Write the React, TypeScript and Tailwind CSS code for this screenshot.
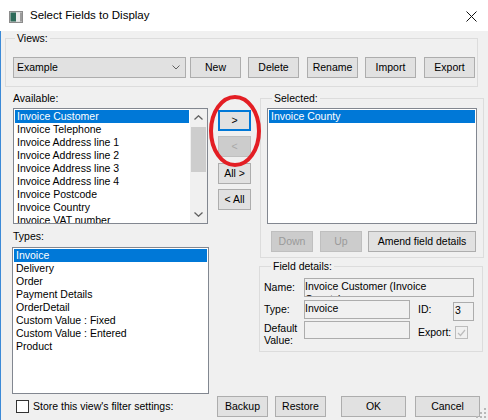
import React from 'react';

const available = [
  'Invoice Customer',
  'Invoice Telephone',
  'Invoice Address line 1',
  'Invoice Address line 2',
  'Invoice Address line 3',
  'Invoice Address line 4',
  'Invoice Postcode',
  'Invoice Country',
  'Invoice VAT number',
];

const types = [
  'Invoice',
  'Delivery',
  'Order',
  'Payment Details',
  'OrderDetail',
  'Custom Value : Fixed',
  'Custom Value : Entered',
  'Product',
];

type ButtonProps = {
  label: React.ReactNode;
  className?: string;
  disabled?: boolean;
  primary?: boolean;
};

function Button({ label, className = '', disabled = false, primary = false }: ButtonProps) {
  const tone = disabled
    ? 'border bg-[#cccccc] border-[#bfbfbf] text-[#9a9a9a]'
    : primary
      ? 'border-2 bg-[#e1e1e1] border-[#0078d7] text-black'
      : 'border bg-[#e1e1e1] border-[#adadad] text-black';
  return (
    <div className={`flex h-[21px] shrink-0 items-center justify-center leading-[13px] ${tone} ${className}`}>
      {label}
    </div>
  );
}

function Row({ text, selected = false }: { text: string; selected?: boolean }) {
  return (
    <div
      className={`h-[13px] shrink-0 overflow-hidden whitespace-nowrap pl-[2px] leading-[13px] ${
        selected ? 'bg-[#0078d7] text-white' : ''
      }`}
    >
      {text}
    </div>
  );
}

function Chevron({ up = false }: { up?: boolean }) {
  return (
    <svg width="9" height="5" viewBox="0 0 9 5" className="block">
      <path
        d={up ? 'M0.5 4.5 L4.5 0.8 L8.5 4.5' : 'M0.5 0.5 L4.5 4.2 L8.5 0.5'}
        fill="none"
        stroke="#606060"
        strokeWidth="1.3"
      />
    </svg>
  );
}

export default function App() {
  return (
    <div className="relative flex h-[420px] w-[488px] flex-col overflow-hidden bg-[#f0f0f0] font-['Liberation_Sans',Arial,sans-serif] text-[10.5px] text-black">
      {/* title bar */}
      <div className="flex h-[31px] shrink-0 items-center bg-white">
        <svg width="14" height="12" viewBox="0 0 14 12" className="ml-[9px] mt-[2px]">
          <rect x="0.5" y="0.5" width="13" height="11" fill="#d4d4d4" stroke="#8c8c8c" />
          <rect x="1.5" y="1.5" width="5.5" height="9" fill="#2e6b5a" />
          <rect x="7" y="1.5" width="4" height="9" fill="#ececec" />
          <rect x="11" y="1.5" width="2" height="9" fill="#9c9c9c" />
        </svg>
        <span className="ml-[7px] mt-[1px] text-[11.5px]">Select Fields to Display</span>
        <svg width="11" height="11" viewBox="0 0 11 11" className="ml-auto mr-[11px] mt-[2px]">
          <path d="M0.5 0.5 L10.5 10.5 M10.5 0.5 L0.5 10.5" stroke="#111" strokeWidth="1" />
        </svg>
      </div>

      <div className="flex flex-1 flex-col border-l border-[#3c8ad7]">
        {/* Views */}
        <fieldset className="ml-[4px] mt-[1px] w-[473px] min-w-0 border border-[#dcdcdc] pb-[8px] pl-[7px]">
          <legend className="ml-[2px] px-[2px] leading-[13px]">Views:</legend>
          <div className="mt-[12px] flex items-center">
            <div className="flex h-[21px] w-[173px] items-center border border-[#adadad] bg-[#e1e1e1] pl-[3px] pr-[5px] leading-[13px]">
              <span className="flex-1">Example</span>
              <svg width="8" height="5" viewBox="0 0 8 5">
                <path d="M0.5 0.5 L4 4 L7.5 0.5" fill="none" stroke="#606060" strokeWidth="1" />
              </svg>
            </div>
            <Button label="New" className="ml-[4px] w-[51px]" />
            <Button label="Delete" className="ml-[7px] w-[51px]" />
            <Button label="Rename" className="ml-[8px] w-[51px]" />
            <Button label="Import" className="ml-[7px] w-[51px]" />
            <Button label="Export" className="ml-[8px] w-[51px]" />
          </div>
        </fieldset>

        {/* lists */}
        <div className="ml-[11px] mt-[5px] flex items-start">
          <div className="flex w-[197px] flex-col">
            <div className="pl-[1px] leading-[13px]">Available:</div>
            <div className="ml-[1px] mt-[3px] flex h-[116px] w-[195px] border border-[#828790] bg-white">
              <div className="flex min-w-0 flex-1 flex-col overflow-hidden p-[1px]">
                {available.map((item, idx) => (
                  <Row key={item} text={item} selected={idx === 0} />
                ))}
              </div>
              <div className="flex w-[17px] flex-col bg-[#f0f0f0]">
                <div className="flex h-[17px] items-center justify-center">
                  <Chevron up />
                </div>
                <div className="mx-[1px] mt-[1px] h-[45px] bg-[#cdcdcd]" />
                <div className="flex-1" />
                <div className="flex h-[17px] items-center justify-center">
                  <Chevron />
                </div>
              </div>
            </div>
            <div className="mt-[6px] pl-[1px] leading-[13px]">Types:</div>
            <div className="mt-[4px] flex h-[147px] w-[197px] flex-col border border-[#828790] bg-white p-[1px]">
              {types.map((item, idx) => (
                <Row key={item} text={item} selected={idx === 0} />
              ))}
            </div>
          </div>

          <div className="ml-[9px] mt-[18px] flex w-[33px] flex-col">
            <Button label=">" primary className="w-[33px]" />
            <Button label="<" disabled className="mt-[5px] w-[33px] text-[#a8a8a8]" />
            <Button label="All >" className="mt-[6px] w-[33px]" />
            <Button label="< All" className="mt-[5px] w-[33px]" />
          </div>

          <div className="ml-[9px] flex flex-col">
            <fieldset className="w-[224px] min-w-0 border border-[#dcdcdc] pb-[5px] pl-[6px]">
              <legend className="ml-[5px] px-[2px] leading-[13px]">Selected:</legend>
              <div className="mt-[3px] flex h-[116px] w-[210px] flex-col border border-[#828790] bg-white p-[1px]">
                <Row text="Invoice County" selected />
              </div>
              <div className="mt-[7px] flex">
                <Button label="Down" disabled className="ml-[4px] w-[42px]" />
                <Button label="Up" disabled className="ml-[7px] w-[42px]" />
                <Button label="Amend field details" className="ml-[6px] w-[108px]" />
              </div>
            </fieldset>

            <fieldset className="-ml-[1px] mt-[2px] w-[224px] min-w-0 border border-[#dcdcdc] pb-[5px] pl-[4px]">
              <legend className="ml-[7px] px-[2px] leading-[13px]">Field details:</legend>
              <div className="mt-[5px] flex h-[19px] items-center">
                <div className="w-[40px] leading-[13px]">Name:</div>
                <div className="h-[19px] w-[170px] overflow-hidden border border-[#acacac] bg-[#f0f0f0] pt-[1px] leading-[13px]">
                  <div className="whitespace-nowrap">Invoice Customer (Invoice</div>
                  <div className="whitespace-nowrap">County)</div>
                </div>
              </div>
              <div className="mt-[3px] flex h-[21px] items-start">
                <div className="mt-[3px] w-[40px] leading-[13px]">Type:</div>
                <div className="h-[19px] w-[106px] border border-[#acacac] bg-[#f0f0f0] pt-[1px] leading-[13px]">
                  Invoice
                </div>
                <div className="ml-[8px] mt-[3px] w-[35px] leading-[13px]">ID:</div>
                <div className="mt-[2px] h-[19px] w-[21px] border border-[#acacac] bg-[#f0f0f0] pl-[1px] pt-[1px] leading-[13px]">
                  3
                </div>
              </div>
              <div className="flex items-start">
                <div className="w-[40px] pt-[1px] leading-[12px]">
                  Default
                  <br />
                  Value:
                </div>
                <div className="h-[18px] w-[106px] border border-[#acacac] bg-[#f0f0f0]" />
                <div className="ml-[8px] mt-[5px] leading-[13px]">Export:</div>
                <div className="ml-[4px] mt-[5px] flex h-[13px] w-[13px] items-center justify-center border border-[#bcbcbc] bg-[#f0f0f0]">
                  <svg width="9" height="8" viewBox="0 0 9 8">
                    <path d="M1 4 L3.5 6.5 L8 1" fill="none" stroke="#bcbcbc" strokeWidth="1.2" />
                  </svg>
                </div>
              </div>
            </fieldset>
          </div>
        </div>

        {/* bottom row */}
        <div className="ml-[15px] mt-[2px] flex h-[21px] items-center">
          <div className="flex w-[201px] items-center">
            <div className="h-[13px] w-[13px] border border-[#333333] bg-white" />
            <span className="ml-[4px] leading-[13px]">Store this view's filter settings:</span>
          </div>
          <Button label="Backup" className="w-[51px]" />
          <Button label="Restore" className="ml-[7px] w-[51px]" />
          <Button label="OK" className="ml-[15px] w-[65px]" />
          <Button label="Cancel" className="ml-[9px] w-[65px]" />
        </div>
      </div>

      {/* size grip */}
      <svg width="10" height="10" viewBox="0 0 10 10" className="absolute bottom-[2px] right-[2px]">
        <g fill="#b8b8b8">
          <rect x="8" y="0" width="2" height="2" />
          <rect x="4" y="4" width="2" height="2" />
          <rect x="8" y="4" width="2" height="2" />
          <rect x="0" y="8" width="2" height="2" />
          <rect x="4" y="8" width="2" height="2" />
          <rect x="8" y="8" width="2" height="2" />
        </g>
      </svg>

      {/* red annotation around the move buttons */}
      <svg width="56" height="76" viewBox="0 0 56 76" className="pointer-events-none absolute left-[207px] top-[93px]">
        <ellipse cx="28" cy="38" rx="24" ry="34" fill="none" stroke="#e31e24" strokeWidth="4" />
      </svg>
    </div>
  );
}
